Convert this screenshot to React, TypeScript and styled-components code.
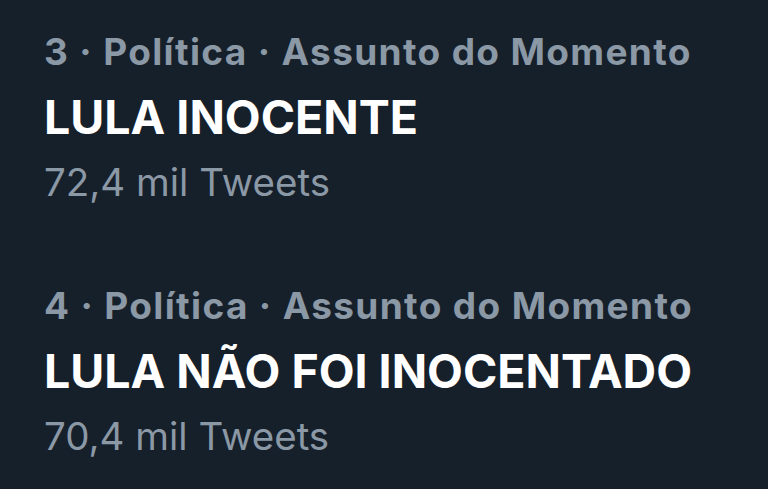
import React from "react";
import styled, { createGlobalStyle } from "styled-components";

const Global = createGlobalStyle`
  html, body { margin: 0; padding: 0; background: #16202b; }
  body { width: 768px; height: 489px; overflow: hidden; }
`;

const Page = styled.main`
  width: 768px;
  height: 489px;
  box-sizing: border-box;
  background: #16202b;
  padding: 30px 0 0 44px;
  display: flex;
  flex-direction: column;
  gap: 78px;
  font-family: Inter, "Liberation Sans", sans-serif;
`;

const Trend = styled.section`
  display: flex;
  flex-direction: column;
`;

const Meta = styled.div`
  color: #8b98a5;
  font-weight: 700;
  font-size: 37px;
  line-height: 44px;
  letter-spacing: 1.35px;
  white-space: nowrap;
`;

const Title = styled.div`
  margin-top: 15px;
  color: #ffffff;
  font-weight: 700;
  font-size: 46.5px;
  line-height: 56px;
  white-space: nowrap;
`;

const Count = styled.div`
  margin-top: 13px;
  color: #8b98a5;
  font-weight: 400;
  font-size: 38.5px;
  line-height: 48px;
  white-space: nowrap;
`;

const trends = [
  { rank: 3, category: "Política", title: "LULA INOCENTE", count: "72,4 mil Tweets" },
  { rank: 4, category: "Política", title: "LULA NÃO FOI INOCENTADO", count: "70,4 mil Tweets" },
];

export default function App() {
  return (
    <>
      <Global />
      <Page>
        {trends.map((t) => (
          <Trend key={t.rank}>
            <Meta>{t.rank} · {t.category} · Assunto do Momento</Meta>
            <Title>{t.title}</Title>
            <Count>{t.count}</Count>
          </Trend>
        ))}
      </Page>
    </>
  );
}
